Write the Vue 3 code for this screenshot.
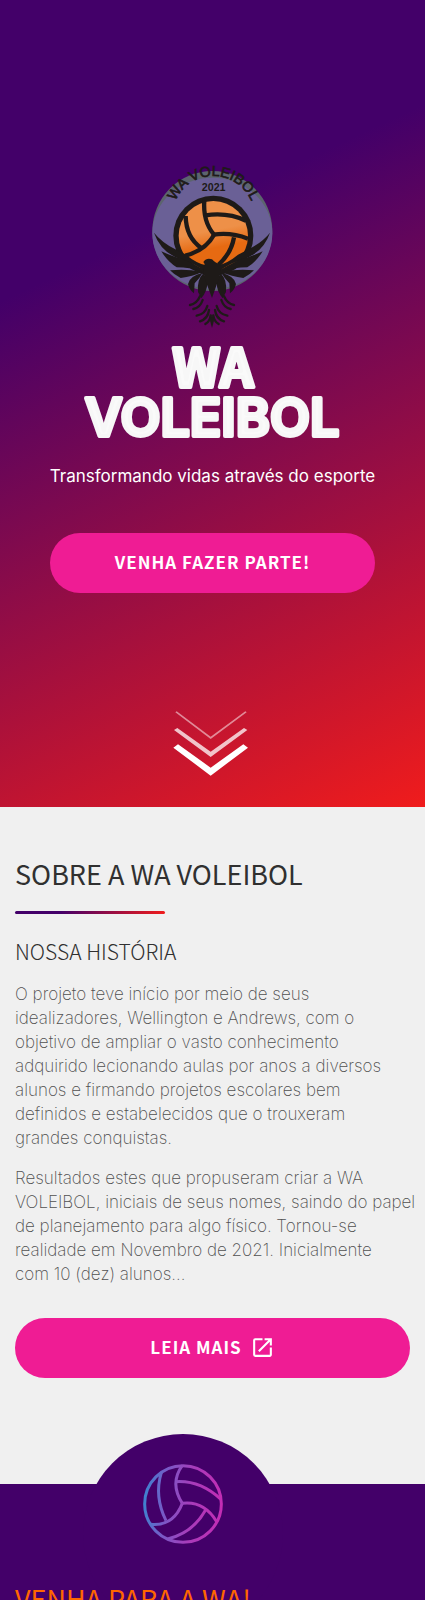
<script setup>
const story = [
  [
    'O projeto teve início por meio de seus',
    'idealizadores, Wellington e Andrews, com o',
    'objetivo de ampliar o vasto conhecimento',
    'adquirido lecionando aulas por anos a diversos',
    'alunos e firmando projetos escolares bem',
    'definidos e estabelecidos que o trouxeram',
    'grandes conquistas.'
  ],
  [
    'Resultados estes que propuseram criar a WA',
    'VOLEIBOL, iniciais de seus nomes, saindo do papel',
    'de planejamento para algo físico. Tornou-se',
    'realidade em Novembro de 2021. Inicialmente',
    'com 10 (dez) alunos...'
  ]
]
</script>

<template>
  <main class="page">
    <header class="hero">
      <div class="hero-content">
        <svg class="crest" viewBox="38 28 363 492" role="img" aria-label="WA Voleibol">
          <defs>
            <linearGradient id="ballFill" x1="0" y1="0" x2="0.2" y2="1">
              <stop offset="0.5" stop-color="#ee9048" />
              <stop offset="0.75" stop-color="#e66a12" />
            </linearGradient>
            <path id="nameArc" d="M98 190 A124 126 0 0 1 346 190" />
            <g id="wing" fill="#1e1a18">
              <path d="M44 234 Q66 262 108 284 L140 300 Q170 325 200 332 L196 350 Q168 326 120 312 Q64 292 44 234Z" />
              <path d="M66 290 Q100 306 130 313 Q168 330 194 347 L190 350 Q150 338 112 338 Q84 320 66 290Z" />
              <path d="M92 347 Q140 341 188 352 Q160 366 124 370 Q104 360 92 347Z" />
              <path d="M146 388 Q150 364 190 354 Q180 372 166 386 L164 416 Q150 406 146 388Z" />
              <path d="M192 356 Q172 376 176 412 L186 431 Q204 408 204 384 Q200 366 192 356Z" />
              <g fill="none" stroke="#1e1a18" stroke-width="7" stroke-linecap="round">
                <path d="M182 425 Q172 448 152 451" />
                <path d="M190 436 Q182 460 162 463" />
                <path d="M204 454 Q198 478 172 483" />
                <path d="M209 466 Q206 492 182 500" />
                <path d="M214 482 Q212 500 198 508" />
              </g>
            </g>
          </defs>
          <circle cx="219" cy="229" r="180" fill="#5c646e" />
          <ellipse cx="219" cy="236" rx="180" ry="167" fill="#6a6096" />
          <circle cx="222" cy="243" r="120" fill="#1e1a18" />
          <circle cx="222" cy="243" r="104" fill="url(#ballFill)" />
          <g fill="none" stroke="#1e1a18" stroke-width="13">
            <path d="M224 240 Q190 200 195 136" />
            <path d="M198 182 Q265 172 320 198" />
            <path d="M222 240 Q275 232 326 252" />
            <path d="M224 240 Q200 286 138 303" />
            <path d="M139 184 Q140 248 186 280" />
            <path d="M284 248 Q276 295 238 330" />
          </g>
          <use href="#wing" />
          <use href="#wing" transform="translate(436 0) scale(-1 1)" />
          <path fill="#1e1a18" d="M192 322 Q202 308 218 314 Q228 326 244 328 Q246 356 232 390 L218 430 L203 390 Q188 356 196 328Z" />
          <path fill="#1e1a18" d="M218 478 L224 498 L218 520 L212 498Z" />
          <text class="crest-name"><textPath href="#nameArc" startOffset="50%" text-anchor="middle">WA VOLEIBOL</textPath></text>
          <text class="crest-year" x="223" y="109" text-anchor="middle">2021</text>
        </svg>
        <h1 class="title">
          <svg viewBox="0 0 280 98">
            <text class="title-top" x="140" y="43" text-anchor="middle">WA</text>
            <text x="139" y="92" text-anchor="middle">VOLEIBOL</text>
          </svg>
        </h1>
        <p class="tagline">Transformando vidas através do esporte</p>
        <a class="button" href="#venha">VENHA FAZER PARTE!</a>
      </div>
      <a class="scroll" href="#sobre" aria-label="Sobre a WA Voleibol">
        <svg viewBox="69 65 225 195" fill="#fff" aria-hidden="true">
          <path opacity="0.5" d="M76 69 L80 66 L182 142 L286 66 L290 69 L182 149Z" />
          <path opacity="0.75" d="M72 122 L82 116 L182 187 L282 116 L292 122 L182 203Z" />
          <path d="M70 175 L84 165 L182 235 L280 165 L294 175 L182 259Z" />
        </svg>
      </a>
    </header>

    <section id="sobre" class="about">
      <h2 class="heading">SOBRE A WA VOLEIBOL</h2>
      <div class="rule"></div>
      <h3 class="subheading">NOSSA HISTÓRIA</h3>
      <p v-for="(lines, i) in story" :key="i" class="copy">
        <template v-for="(line, j) in lines" :key="j">{{ line }}<br v-if="j < lines.length - 1" /></template>
      </p>
      <a class="button more" href="#historia">
        LEIA MAIS
        <svg viewBox="0 0 24 24" fill="#fff" aria-hidden="true">
          <path d="M19 19H5V5h7V3H5a2 2 0 0 0-2 2v14a2 2 0 0 0 2 2h14c1.1 0 2-.9 2-2v-7h-2v7zM14 3v2h3.59l-9.83 9.83 1.41 1.41L19 6.41V10h2V3h-7z" />
        </svg>
      </a>
    </section>

    <section id="venha" class="join">
      <div class="bump">
        <svg viewBox="39 42 240 240" fill="none" stroke="url(#lineFill)" stroke-width="9" aria-hidden="true">
          <defs>
            <linearGradient id="lineFill" gradientUnits="userSpaceOnUse" x1="39" y1="150" x2="279" y2="170">
              <stop offset="0" stop-color="#3c84d0" />
              <stop offset="0.28" stop-color="#7a58c6" />
              <stop offset="0.6" stop-color="#a83cba" />
              <stop offset="1" stop-color="#c42cb4" />
            </linearGradient>
          </defs>
          <circle cx="159" cy="162" r="115" />
          <path d="M157 46 Q118 100 157 160" />
          <path d="M137 95 Q210 90 273 148" />
          <path d="M157 160 Q222 152 260 215" />
          <path d="M157 160 Q130 230 62 223" />
          <path d="M94 68 Q72 140 108 212" />
          <path d="M228 178 Q190 248 113 267" />
        </svg>
      </div>
      <h2 class="heading accent">VENHA PARA A WA!</h2>
    </section>
  </main>
</template>

<style>
body {
  margin: 0;
  background: #f0f0f0;
}
</style>

<style scoped>
.page {
  height: 100vh;
  overflow: hidden;
  color: #303030;
  font-family: Inter, "Open Sans", sans-serif;
}
.hero {
  box-sizing: border-box;
  display: flex;
  flex-direction: column;
  align-items: center;
  padding: 164px 50px 31px;
  background: linear-gradient(155deg, #430069 30%, #f01c1c);
}
.hero-content {
  display: flex;
  flex-direction: column;
  align-items: center;
  align-self: stretch;
  text-align: center;
}
.crest {
  display: block;
  width: 121px;
  height: 164px;
}
.crest-name {
  font: 500 43px "Liberation Sans", sans-serif;
  fill: #1e1a18;
  stroke: #1e1a18;
  stroke-width: 2;
}
.crest-year {
  font: 700 32px "Liberation Sans", sans-serif;
  fill: #1e1a18;
}
.title {
  margin: 16px 0 0;
}
.title svg {
  display: block;
  overflow: visible;
  width: 280px;
  height: 98px;
  font: 600 52px Inter, sans-serif;
  fill: #fafafa;
  stroke: #f7f7f7;
  stroke-width: 4px;
  stroke-linejoin: round;
}
.title-top {
  font-family: "Noto Sans CJK JP", sans-serif;
}
.tagline {
  margin: 22px 0 45px;
  color: #fff;
  font-size: 17px;
  line-height: 24px;
  white-space: nowrap;
}
.button {
  box-sizing: border-box;
  display: flex;
  align-items: center;
  justify-content: center;
  gap: 8px;
  width: 100%;
  height: 60px;
  padding-bottom: 2px;
  border-radius: 30px;
  background: #ef1c94;
  color: #fff;
  font: 700 17px/24px "Noto Sans CJK JP", sans-serif;
  letter-spacing: 1px;
  text-decoration: none;
}
.more svg {
  width: 25px;
  height: 25px;
}
.scroll {
  display: block;
  margin: 118px 4px 0 0;
}
.scroll svg {
  display: block;
  width: 75px;
  height: 65px;
}
.about {
  padding: 44px 15px 106px;
}
.heading {
  margin: 0;
  font: 400 27px/45px "Noto Sans CJK JP", sans-serif;
}
.rule {
  width: 150px;
  height: 3px;
  margin: 15px 0 19px;
  border-radius: 2px;
  background: linear-gradient(110deg, #430069 30%, #f01c1c);
}
.subheading {
  margin: 0 0 13px;
  font: 300 21px/36px "Noto Sans CJK JP", sans-serif;
}
.copy {
  margin: 0 0 16px;
  color: #505050;
  font-size: 17px;
  font-weight: 200;
  line-height: 24px;
  white-space: nowrap;
}
.about .button {
  margin-top: 32px;
}
.join {
  position: relative;
  padding: 92px 15px 60px;
  background: #430069;
}
.bump {
  position: absolute;
  top: -50px;
  left: 83px;
  display: flex;
  justify-content: center;
  width: 200px;
  height: 200px;
  border-radius: 50%;
  background: #430069;
}
.bump svg {
  width: 80px;
  height: 80px;
  margin-top: 30px;
}
.accent {
  position: relative;
  color: #ff6600;
}
</style>
